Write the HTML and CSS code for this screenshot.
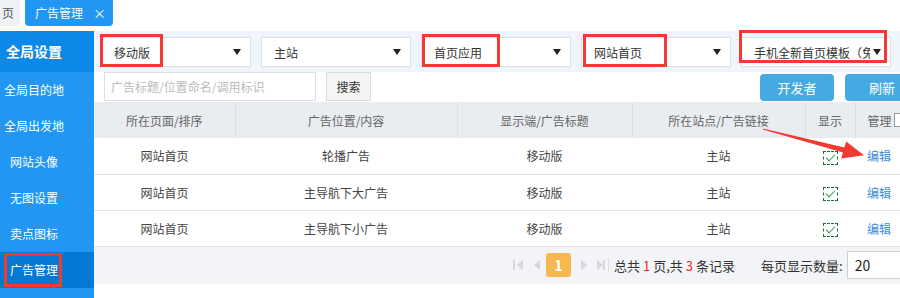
FILE: index.html
```html
<!DOCTYPE html>
<html lang="zh-CN">

<head>
    <meta charset="UTF-8">
    <meta name="viewport" content="width=device-width, initial-scale=1">
    <title>广告管理</title>
    <link rel="stylesheet" href="styles.css">
</head>

<body>
    <!-- 标签栏 -->
    <div class="tabs">
        <div class="tab tabPrev">页</div>
        <div class="tab tabActive">广告管理<span class="tabClose">×</span></div>
    </div>

    <div class="layout">
        <!-- 左侧菜单 -->
        <ul class="sidebar">
            <li class="sideTitle">全局设置</li>
            <li>全局目的地</li>
            <li>全局出发地</li>
            <li>网站头像</li>
            <li>无图设置</li>
            <li>卖点图标</li>
            <li class="sideActive">广告管理</li>
        </ul>

        <main class="main">
            <!-- 筛选条件 -->
            <div class="filterBar">
                <div class="select"><span class="selectText">移动版</span><i class="caret"></i></div>
                <div class="select"><span class="selectText">主站</span><i class="caret"></i></div>
                <div class="select"><span class="selectText">首页应用</span><i class="caret"></i></div>
                <div class="select"><span class="selectText">网站首页</span><i class="caret"></i></div>
                <div class="select"><span class="selectText">手机全新首页模板（免费）</span><i class="caret"></i></div>
            </div>

            <!-- 搜索 -->
            <div class="searchRow">
                <input class="searchInput" type="text" placeholder="广告标题/位置命名/调用标识">
                <button class="btnSearch">搜索</button>
                <div class="toolBtns">
                    <button class="btnBlue">开发者</button>
                    <button class="btnBlue">刷新</button>
                </div>
            </div>

            <!-- 列表 -->
            <table class="grid">
                <colgroup>
                    <col class="c1"><col class="c2"><col class="c3"><col class="c4"><col class="c5"><col class="c6">
                </colgroup>
                <thead>
                    <tr>
                        <th>所在页面/排序</th>
                        <th>广告位置/内容</th>
                        <th>显示端/广告标题</th>
                        <th>所在站点/广告链接</th>
                        <th>显示</th>
                        <th class="thManage">管理 <i class="headBox"></i></th>
                    </tr>
                </thead>
                <tbody>
                    <tr>
                        <td>网站首页</td>
                        <td>轮播广告</td>
                        <td>移动版</td>
                        <td>主站</td>
                        <td><span class="check"></span></td>
                        <td><a class="link" href="#">编辑</a></td>
                    </tr>
                    <tr>
                        <td>网站首页</td>
                        <td>主导航下大广告</td>
                        <td>移动版</td>
                        <td>主站</td>
                        <td><span class="check"></span></td>
                        <td><a class="link" href="#">编辑</a></td>
                    </tr>
                    <tr>
                        <td>网站首页</td>
                        <td>主导航下小广告</td>
                        <td>移动版</td>
                        <td>主站</td>
                        <td><span class="check"></span></td>
                        <td><a class="link" href="#">编辑</a></td>
                    </tr>
                </tbody>
            </table>

            <!-- 分页 -->
            <div class="pager">
                <span class="pgIcon pgFirst"></span>
                <span class="pgIcon pgPrev"></span>
                <span class="pgCur">1</span>
                <span class="pgIcon pgNext"></span>
                <span class="pgIcon pgLast"></span>
                <span class="pgSep"></span>
                <span class="pgInfo">总共<em>1</em>页,共<em>3</em>条记录</span>
                <span class="pgSizeLabel">每页显示数量:</span>
                <div class="pgSize">20<i class="caret caretGray"></i></div>
            </div>
        </main>
    </div>

    <!-- 标注 -->
    <div class="mark mark1"></div>
    <div class="mark mark2"></div>
    <div class="mark mark3"></div>
    <div class="mark mark4"></div>
    <div class="mark mark5"></div>
    <svg class="arrow" width="900" height="298" viewBox="0 0 900 298">
        <polygon points="763,128.4 844.4,147.6 846.2,141.6 864,155.2 841.2,158.6 843,152.6 763,129.6" fill="#f23a32" />
    </svg>
</body>

</html>
```

FILE: styles.css
```css
/* リセット */
body,
ul,
li,
div,
table,
th,
td {
    margin: 0;
    padding: 0;
    box-sizing: border-box;
}

li {
    list-style: none;
}

html,
body {
    width: 900px;
    height: 298px;
    overflow: hidden;
}

body {
    position: relative;
    font-family: "Noto Sans CJK SC", "Noto Sans", sans-serif;
    font-size: 12px;
    color: #333;
    background-color: #FFFFFF;
}

/* 标签栏 */
.tabs {
    display: flex;
    align-items: flex-start;
    height: 31px;
}

.tab {
    height: 26px;
    line-height: 26px;
    font-size: 12px;
    white-space: nowrap;
}

.tabPrev {
    width: 20px;
    padding-left: 2px;
    color: #555;
    background-color: #EEF1F5;
    border-radius: 0 0 4px 0;
}

.tabActive {
    display: flex;
    margin-left: 5px;
    padding: 0 7px 0 10px;
    color: #FFFFFF;
    background-color: #2196F3;
    border-radius: 0 0 4px 4px;
}

.tabClose {
    margin-left: 10px;
    font-size: 13px;
}

/* 布局 */
.layout {
    display: flex;
    height: 267px;
}

.sidebar {
    flex-shrink: 0;
    width: 94px;
    background-color: #2196F3;
}

.sidebar>li {
    height: 36px;
    padding-right: 26px;
    line-height: 36px;
    font-size: 12px;
    color: #FFFFFF;
    text-align: center;
    white-space: nowrap;
}

.sidebar>.sideTitle {
    height: 41px;
    line-height: 41px;
    font-size: 14px;
    font-weight: 700;
    background-color: #0C88E8;
}

.sidebar>.sideActive {
    background-color: #0578D4;
}

.main {
    flex-shrink: 0;
    width: 830px;
}

/* 筛选条件 */
.filterBar {
    display: flex;
    gap: 10px;
    height: 41px;
    padding: 6px 0 0 7px;
    background-color: #EEF5FC;
}

.select {
    display: flex;
    align-items: center;
    flex-shrink: 0;
    width: 150px;
    height: 30px;
    padding: 0 9px 0 12px;
    background-color: #FFFFFF;
    border: 1px solid #DCDFE3;
}

.selectText {
    flex-grow: 1;
    overflow: hidden;
    white-space: nowrap;
    color: #333;
}

.caret {
    flex-shrink: 0;
    width: 0;
    height: 0;
    margin-left: 3px;
    border-top: 6px solid #222;
    border-left: 4px solid transparent;
    border-right: 4px solid transparent;
}

.caretGray {
    border-top-color: #999;
}

/* 搜索 */
.searchRow {
    display: flex;
    align-items: flex-start;
    height: 30px;
}

.searchInput {
    width: 212px;
    height: 29px;
    margin: 0 0 0 10px;
    padding: 0 6px;
    font-family: inherit;
    font-size: 12px;
    border: 1px solid #DCDFE3;
    outline: none;
    box-sizing: border-box;
}

.searchInput::placeholder {
    color: #BBBBBB;
}

.btnSearch {
    width: 45px;
    height: 29px;
    margin-left: 10px;
    padding: 0;
    font-family: inherit;
    font-size: 12px;
    color: #333;
    background-color: #F5F5F5;
    border: 1px solid #DCDCDC;
}

.toolBtns {
    display: flex;
    gap: 11px;
    margin-left: auto;
    margin-right: 5px;
    padding-top: 2px;
}

.btnBlue {
    width: 74px;
    height: 27px;
    padding: 0;
    font-family: inherit;
    font-size: 13px;
    color: #FFFFFF;
    background-color: #46AAE2;
    border: none;
    border-radius: 4px;
}

/* 列表 */
.grid {
    width: 830px;
    table-layout: fixed;
    border-collapse: collapse;
}

.c1 { width: 141px; }
.c2 { width: 222px; }
.c3 { width: 175px; }
.c4 { width: 173px; }
.c5 { width: 50px; }
.c6 { width: 69px; }

.grid th {
    height: 36px;
    font-weight: 400;
    color: #666;
    text-align: center;
    background-color: #E9ECF0;
    border-left: 1px solid #DCE0E5;
}

.grid th:first-child {
    border-left: none;
}

.grid .thManage {
    padding-left: 12px;
    text-align: left;
    white-space: nowrap;
}

.headBox {
    display: inline-block;
    width: 12px;
    height: 12px;
    vertical-align: -1px;
    border: 1px solid #999;
    background-color: #FFFFFF;
}

.grid td {
    height: 36px;
    color: #444;
    text-align: center;
    border-bottom: 1px solid #DFE2E6;
}

.grid td:last-child {
    padding-right: 21px;
}

.check {
    position: relative;
    display: inline-block;
    width: 15px;
    height: 14px;
    vertical-align: middle;
    border: 1px dashed #1D6E3C;
    box-sizing: border-box;
}

.check::after {
    content: "";
    position: absolute;
    left: 2px;
    top: 2px;
    width: 8px;
    height: 4px;
    border-left: 1.5px solid #2E9C55;
    border-bottom: 1.5px solid #2E9C55;
    transform: rotate(-45deg);
}

.link {
    color: #3A8EDA;
    text-decoration: none;
}

/* 分页 */
.pager {
    display: flex;
    align-items: center;
    height: 37px;
    padding-left: 419px;
    font-size: 13px;
    white-space: nowrap;
    background-color: #F3F4F7;
}

.pager>* {
    flex-shrink: 0;
}

.pgIcon {
    position: relative;
    width: 0;
    height: 0;
    border-top: 5px solid transparent;
    border-bottom: 5px solid transparent;
}

.pgFirst {
    margin-left: 4px;
    border-right: 6px solid #D5D7DB;
}

.pgFirst::before,
.pgLast::after {
    content: "";
    position: absolute;
    top: -5px;
    width: 2px;
    height: 10px;
    background-color: #D5D7DB;
}

.pgFirst::before {
    left: -4px;
}

.pgPrev {
    margin-left: 11px;
    border-right: 6px solid #D5D7DB;
}

.pgCur {
    width: 25px;
    height: 24px;
    margin-left: 6px;
    line-height: 24px;
    font-size: 14px;
    font-weight: 700;
    color: #FFFFFF;
    text-align: center;
    background-color: #F7B84F;
    border-radius: 3px;
}

.pgNext {
    margin-left: 10px;
    border-left: 6px solid #D5D7DB;
}

.pgLast {
    margin-left: 10px;
    border-left: 6px solid #D5D7DB;
}

.pgLast::after {
    left: 0;
}

.pgSep {
    width: 1px;
    height: 14px;
    margin-left: 5px;
    background-color: #DDD;
}

.pgInfo {
    margin-left: 5px;
    color: #333;
}

.pgInfo>em {
    margin: 0 3px;
    font-style: normal;
    color: #F5281E;
}

.pgSizeLabel {
    margin-left: 26px;
    color: #333;
}

.pgSize {
    display: flex;
    align-items: center;
    justify-content: space-between;
    width: 70px;
    height: 28px;
    margin-left: 4px;
    padding: 0 8px 0 7px;
    font-size: 14px;
    color: #222;
    background-color: #FFFFFF;
    border: 1px solid #CFCFCF;
}

/* 标注 */
.mark {
    position: absolute;
    border: 3px solid #F23A32;
}

.mark1 {
    left: 100px;
    top: 34px;
    width: 63px;
    height: 33px;
}

.mark2 {
    left: 4px;
    top: 253px;
    width: 58px;
    height: 34px;
}

.mark3 {
    left: 422px;
    top: 34px;
    width: 78px;
    height: 33px;
}

.mark4 {
    left: 583px;
    top: 34px;
    width: 84px;
    height: 33px;
}

.mark5 {
    left: 739px;
    top: 30px;
    width: 148px;
    height: 33px;
}

.arrow {
    position: absolute;
    left: 0;
    top: 0;
    pointer-events: none;
}
```
